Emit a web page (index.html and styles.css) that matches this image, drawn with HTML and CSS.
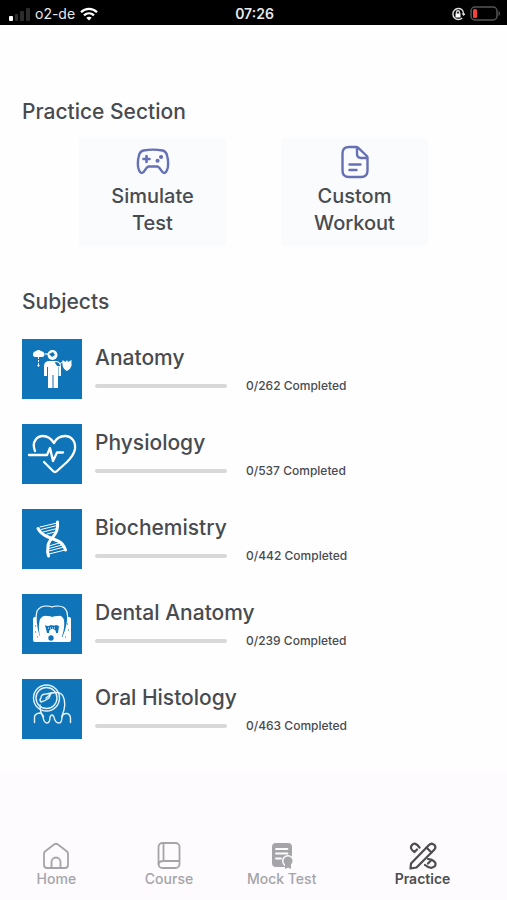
FILE: index.html
```html
<!DOCTYPE html>
<html lang="en">
<head>
    <meta charset="UTF-8">
    <meta name="viewport" content="width=device-width, initial-scale=1.0">
    <title>Practice</title>
    <link rel="stylesheet" href="styles.css">
</head>
<body>
<div class="status-bar">
    <div class="status-left">
        <svg width="22" height="14" viewBox="0 0 22 14">
            <rect x="1" y="9" width="4" height="5" rx="1" fill="#fff"/>
            <rect x="7" y="7" width="3" height="7" rx="1" fill="#2c2c2c"/>
            <rect x="12" y="4" width="4" height="10" rx="1" fill="#2c2c2c"/>
            <rect x="18" y="1" width="4" height="13" rx="1" fill="#2c2c2c"/>
        </svg>
        <span class="carrier">o2-de</span>
        <svg width="18" height="14" viewBox="0 0 18 14" fill="none" stroke="#fff" stroke-width="2.3">
            <path d="M1 5.2C5.5.8 12.500.8 17 5.200"/>
            <path d="M4 8.400c2.900-2.700 7.100-2.700 10 0"/>
            <path d="M6.300 10.800C7.800 9.300 10.200 9.300 11.700 10.800L9 13.500z" fill="#fff" stroke="none"/>
        </svg>
    </div>
    <span class="clock">07:26</span>
    <div class="status-right">
        <svg width="14" height="14" viewBox="0 0 14 14" fill="none" stroke="#ddd" stroke-width="1.400">
            <path d="M11 2.800A5.500 5.500 0 1 0 11.200 11M11 2.800A5.500 5.500 0 0 1 12.500 7"/>
            <path d="M10.500 6.500h4l-2 2.500z" fill="#ddd" stroke="none"/>
            <rect x="4.500" y="6.500" width="5" height="4" fill="#fff" stroke="none"/>
            <path d="M5.500 7V5.300a1.500 1.500 0 0 1 3 0V7"/>
        </svg>
        <svg width="31" height="15" viewBox="0 0 31 15">
            <rect x="1" y="1" width="26" height="13" rx="4" fill="none" stroke="#555" stroke-width="1.500"/>
            <rect x="3" y="3" width="4" height="9" rx="1.500" fill="#f8403a"/>
            <path d="M28.500 5c2 .8 2 4.200 0 5z" fill="#555"/>
        </svg>
    </div>
</div>

<main class="content">
    <section class="practice">
        <h2>Practice Section</h2>
        <div class="cards">
            <button class="card" type="button">
                <svg width="34" height="34" viewBox="0 0 34 34" fill="none" stroke="#6670b5" stroke-width="2.400" stroke-linecap="round" stroke-linejoin="round">
                    <path d="M7.500 5.500Q17 3.800 26.500 5.500Q29.500 6 30.800 9.500Q32.800 16 31.800 22.500Q30.500 28 28 28C25.500 28 25 22.500 21.500 21.500H12.500C9 22.500 8.500 28 6 28Q3.500 28 2.200 22.500Q1.200 16 3.200 9.500Q4.500 6 7.500 5.500Z"/>
                    <path d="M10.500 11v6M7.500 14h6" stroke-width="2.600"/>
                    <path d="M25 12h.1M21.500 15.800h.1" stroke-width="4"/>
                </svg>
                <span>Simulate<br>Test</span>
            </button>
            <button class="card" type="button">
                <svg width="34" height="34" viewBox="0 0 34 34" fill="none" stroke="#6670b5" stroke-width="2.400" stroke-linecap="round" stroke-linejoin="round">
                    <path d="M18 2H11Q4.500 2 4.500 8.500V25.500Q4.500 32 11 32H23Q29.500 32 29.500 25.500V13Q29.500 12 28.800 11L20 2.700Q19.300 2 18 2Z"/>
                    <path d="M19 2.500V9Q19 13 23 13H29"/>
                    <path d="M11.500 19.500H22.500M11.500 25H18.500"/>
                </svg>
                <span>Custom<br>Workout</span>
            </button>
        </div>
    </section>

    <section class="subjects">
        <h2>Subjects</h2>
        <ul class="subject-list">
            <li class="subject">
                <svg class="tile" viewBox="0 0 60 60" fill="#fff">
                    <path d="M11 15.500q0-3 3-3.500 2.500-2 5 0 3.500.5 3.500 3.500 0 2.500-3 2.500h-6q-2.500 0-2.500-2.500z"/>
                    <path d="M16.500 18v8" fill="none" stroke="#fff" stroke-dasharray="2 1"/>
                    <path d="M15 26h3l-1.500 2z"/>
                    <circle cx="30.500" cy="16" r="5"/>
                    <path d="M27 15l4-2 2 3-3 2z" fill="#0f75b8"/>
                    <path d="M23 15h4" stroke="#fff" stroke-width="1.200"/>
                    <path d="M26 22h9q4 1 4 6v9h-2.500v-9H36v21h-4.500V36h-1v13H26V28h-1v9h-3V27q0-4 4-5z"/>
                    <path d="M33 23q5 0 5 4-4 1-5-4z" fill="#0f75b8"/>
                    <path d="M37 25l4-2" fill="none" stroke="#fff"/>
                    <path d="M40.500 21l3 2 1.500-2 1 2 3.500-2v6q-1 3-4.500 5-4-2-4.500-6z"/>
                </svg>
                <div class="info">
                    <label for="anatomy">Anatomy</label>
                    <div class="score">
                        <progress id="anatomy" value="0" max="262"></progress>
                        <span>0/262 Completed</span>
                    </div>
                </div>
            </li>
            <li class="subject">
                <svg class="tile" viewBox="0 0 60 60" fill="none" stroke="#fff" stroke-width="2.300" stroke-linecap="round" stroke-linejoin="round">
                    <path d="M13 27C9 17 16 12 21 12c5 0 9 4 11 7 2-4 6-7 11-7 6 0 11 5 10 13-1 5-4 9-8 13l-10 9q-2 2-4 0l-9-9"/>
                    <path d="M7 31H25L28 24L31 37L35 28.500H41"/>
                </svg>
                <div class="info">
                    <label for="physiology">Physiology</label>
                    <div class="score">
                        <progress id="physiology" value="0" max="537"></progress>
                        <span>0/537 Completed</span>
                    </div>
                </div>
            </li>
            <li class="subject">
                <svg class="tile" viewBox="0 0 60 60" fill="none" stroke="#fff" stroke-linecap="round">
                    <path d="M16 19.500Q19 25 25 27.500T36 32Q41 34 43.500 41" stroke-width="3"/>
                    <path d="M35.500 13Q36.500 22 31 28T26 38Q25 43 26.500 47" stroke-width="3"/>
                    <path d="M18 18l17-4M19 20.500l16-4M21 23l14-3.500M25 25l8-2M27 37l10-3M27 39.500l13-3.500M27 42l15-4M27 45l16-4"/>
                </svg>
                <div class="info">
                    <label for="biochemistry">Biochemistry</label>
                    <div class="score">
                        <progress id="biochemistry" value="0" max="442"></progress>
                        <span>0/442 Completed</span>
                    </div>
                </div>
            </li>
            <li class="subject">
                <svg class="tile" viewBox="0 0 60 60">
                    <path d="M11 25q0-2 2-2h2l1-6h27l2 6h2q2 0 2 2v21q0 2-2 2H13q-2 0-2-2z" fill="#fff"/>
                    <path d="M17 42C14 32 13 24 15 17q3-5 9-5 4 0 6 1 2-1 6-1 7 0 9 6c2 8 0 16-4 25" fill="#0f75b8" stroke="#fff" stroke-width="1.200"/>
                    <path d="M19 47C17 39 16 32 18 25q3-4 7-3 4 0 5 1 2-1 6-1 4-1 6 4c1 7-1 15-4 21z" fill="#fff"/>
                    <path d="M23 31q3 2 6 0 3 1 5 0l3 1-1 7h-2q0-4-4-4-3 0-3 4h-2z" fill="#0f75b8"/>
                    <path d="M26 34h7" stroke="#fff" stroke-dasharray="1 1"/>
                    <circle cx="29" cy="44" r="2.700" fill="#0f75b8"/>
                    <path d="M13 32h1M13 38h1M15 43h1M45 30h1M46 36h1M43 43h1" stroke="#0f75b8"/>
                </svg>
                <div class="info">
                    <label for="dental">Dental Anatomy</label>
                    <div class="score">
                        <progress id="dental" value="0" max="239"></progress>
                        <span>0/239 Completed</span>
                    </div>
                </div>
            </li>
            <li class="subject">
                <svg class="tile" viewBox="0 0 60 60" fill="none" stroke="#e3f2fb" stroke-width="1.400" stroke-linecap="round">
                    <circle cx="24.500" cy="19" r="13"/>
                    <circle cx="24.500" cy="19" r="10.500"/>
                    <path d="M19 19q0-4 5-4l5-1-2 5q-4 3-8 4-2-2 0-4zM24 19l6-5"/>
                    <path d="M18 26q0 7 3 12 1 6 4 6t3-6q2-4 4 0 1 6 5 6 3 0 3-7 5-12 1-20-3-5-11-3"/>
                    <path d="M12.500 43.500V38q0-3 5-4 3 0 4 4M40 38q1-4 5-3.500 3.500 1 3.500 5v4"/>
                </svg>
                <div class="info">
                    <label for="histology">Oral Histology</label>
                    <div class="score">
                        <progress id="histology" value="0" max="463"></progress>
                        <span>0/463 Completed</span>
                    </div>
                </div>
            </li>
        </ul>
    </section>
</main>

<nav class="tab-bar">
    <a class="tab" href="#home">
        <svg width="28" height="28" viewBox="0 0 28 28" fill="none" stroke="currentColor" stroke-width="1.800" stroke-linejoin="round">
            <path d="M2 11.500Q2 10.500 3 9.500L12 2.500Q14 1 16 2.500L25 9.500Q26 10.500 26 11.500V23Q26 26 23 26H5Q2 26 2 23Z"/>
            <path d="M9.500 26V20a4.500 4.500 0 0 1 9 0V26"/>
        </svg>
        <span>Home</span>
    </a>
    <a class="tab" href="#course">
        <svg width="28" height="28" viewBox="0 0 28 28" fill="none" stroke="currentColor" stroke-width="1.800">
            <rect x="3.500" y="1" width="21" height="25" rx="4"/>
            <path d="M8.500 1V19M3.500 22.500Q4 19 8 19H24.500"/>
        </svg>
        <span>Course</span>
    </a>
    <a class="tab" href="#mock">
        <svg width="28" height="28" viewBox="0 0 28 28">
            <rect x="4" y="1" width="20" height="24" rx="4" fill="currentColor"/>
            <path d="M8 7H19.500M8 11.500H19.500M8 16.500H13" stroke="#fdfbfe" stroke-width="1.800" stroke-linecap="round"/>
            <circle cx="20" cy="19" r="6" fill="#fdfbfe"/>
            <circle cx="20" cy="19" r="4.500" fill="currentColor"/>
            <path d="M17 21h6v6l-3-1.500L17 27z" fill="currentColor"/>
        </svg>
        <span>Mock Test</span>
    </a>
    <a class="tab tab-active" href="#practice">
        <svg width="28" height="28" viewBox="0 0 28 28" fill="none" stroke="currentColor" stroke-width="2.200" stroke-linecap="round" stroke-linejoin="round">
            <path d="M2 21.500L20 3Q22.500.5 25.500 3Q27.500 5.500 25 8L7.500 25.500L1.500 26.500Z"/>
            <path d="M17.500 5.500L22.500 10.500"/>
            <path d="M5.500 10Q0 6.500 3 3T10.500 5.500M5.500 10L8 7.500"/>
            <path d="M19 17L22 17.500Q28 20 26 24Q22 28 16 23M19 21.500L22 18.500"/>
        </svg>
        <span>Practice</span>
    </a>
</nav>
</body>
</html>
```
FILE: styles.css
```css
* {
    box-sizing: border-box;
}
body {
    margin: 0;
    min-height: 100vh;
    display: flex;
    flex-direction: column;
    font-family: Inter, "Liberation Sans", sans-serif;
    font-weight: 500;
    color: #484b50;
    background-color: #fdfbfe;
}
svg {
    display: block;
    flex: none;
}
.status-bar {
    display: grid;
    grid-template-columns: 1fr auto 1fr;
    align-items: center;
    height: 25px;
    padding: 2px 6px 0 8px;
    background-color: #000;
    color: #e8e8e8;
    font-size: 14px;
}
.status-left, .status-right {
    display: flex;
    align-items: center;
    gap: 5px;
}
.status-right {
    justify-content: flex-end;
}
.carrier {
    font-weight: 400;
}
.clock {
    font-weight: 600;
}
.content {
    background-color: #fefefe;
    padding-top: 48px;
}
h2 {
    margin: 0;
    font-size: 21px;
    line-height: 28px;
    font-weight: 500;
}
.practice {
    padding: 25px 22px 16px;
}
.cards {
    display: flex;
    justify-content: center;
    gap: 55px;
    margin-top: 12px;
}
.card {
    display: flex;
    flex-direction: column;
    align-items: center;
    gap: 4px;
    width: 147px;
    padding: 7px 8px 9px;
    border: 0;
    background-color: #f9fbfd;
    color: inherit;
    font: inherit;
    font-size: 20px;
    line-height: 27px;
    cursor: pointer;
}
.subjects {
    padding: 26px 22px 33px;
}
.subject-list {
    display: flex;
    flex-direction: column;
    gap: 25px;
    margin: 23px 0 0;
    padding: 0;
    list-style: none;
}
.subject {
    display: flex;
    gap: 13px;
}
.tile {
    width: 60px;
    height: 60px;
    background-color: #0f75b8;
}
.info {
    padding-top: 5px;
}
.info label {
    display: block;
    font-size: 21px;
    line-height: 28px;
}
.score {
    display: flex;
    align-items: center;
    gap: 19px;
    margin-top: 6px;
    font-size: 12px;
    line-height: 16px;
}
progress {
    appearance: none;
    width: 132px;
    height: 4px;
    border: 0;
    border-radius: 2px;
    overflow: hidden;
    background-color: #d8d8d9;
}
progress::-webkit-progress-bar {
    background-color: #d8d8d9;
}
progress::-webkit-progress-value {
    background-color: #0f75b8;
}
.tab-bar {
    display: flex;
    margin-top: auto;
    padding: 14px 0 12px;
}
.tab {
    flex: 2;
    display: flex;
    flex-direction: column;
    align-items: center;
    gap: 0;
    color: #a5a4a8;
    font-size: 14px;
    line-height: 18px;
    text-decoration: none;
}
.tab-active {
    flex: 3;
    color: #4d4d50;
    font-weight: 600;
}
```
